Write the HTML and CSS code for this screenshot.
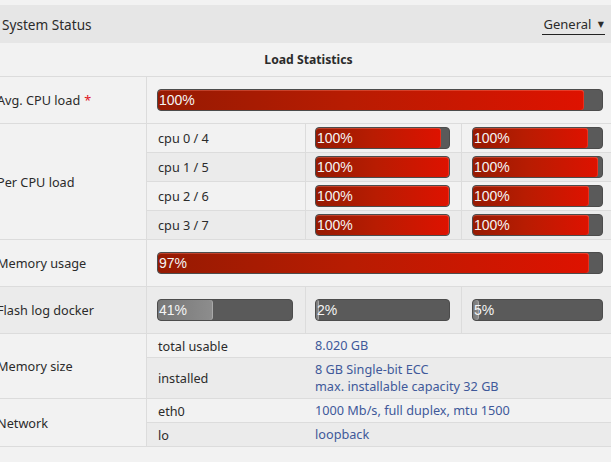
FILE: index.html
```html
<!DOCTYPE html>
<html lang="en">
  <head>
    <meta charset="UTF-8" />
    <title>System Status</title>
    <link rel="stylesheet" href="styles.css">
  </head>

  <body>
    <header class="topbar">
      <h1>System Status</h1>
      <div class="picker">General <span class="caret">&#9660;</span></div>
    </header>

    <h2 class="sectionTitle">Load Statistics</h2>

    <main class="stats">
      <div class="row tall">
        <div class="label">Avg. CPU load <span class="req">*</span></div>
        <div class="value">
          <div class="bar"><div class="fill" style="width: 96%"></div><span class="pct">100%</span></div>
        </div>
      </div>

      <div class="row">
        <div class="label">Per CPU load</div>
        <div class="group">
          <div class="sub cpu">
            <div class="cell name">cpu 0 / 4</div>
            <div class="cell mid"><div class="bar"><div class="fill" style="width: 94%"></div><span class="pct">100%</span></div></div>
            <div class="cell last"><div class="bar"><div class="fill" style="width: 89%"></div><span class="pct">100%</span></div></div>
          </div>
          <div class="sub cpu alt">
            <div class="cell name">cpu 1 / 5</div>
            <div class="cell mid"><div class="bar"><div class="fill" style="width: 100%"></div><span class="pct">100%</span></div></div>
            <div class="cell last"><div class="bar"><div class="fill" style="width: 97%"></div><span class="pct">100%</span></div></div>
          </div>
          <div class="sub cpu">
            <div class="cell name">cpu 2 / 6</div>
            <div class="cell mid"><div class="bar"><div class="fill" style="width: 100%"></div><span class="pct">100%</span></div></div>
            <div class="cell last"><div class="bar"><div class="fill" style="width: 90%"></div><span class="pct">100%</span></div></div>
          </div>
          <div class="sub cpu alt">
            <div class="cell name">cpu 3 / 7</div>
            <div class="cell mid"><div class="bar"><div class="fill" style="width: 100%"></div><span class="pct">100%</span></div></div>
            <div class="cell last"><div class="bar"><div class="fill" style="width: 90%"></div><span class="pct">100%</span></div></div>
          </div>
        </div>
      </div>

      <div class="row tall">
        <div class="label">Memory usage</div>
        <div class="value">
          <div class="bar"><div class="fill" style="width: 97%"></div><span class="pct">97%</span></div>
        </div>
      </div>

      <div class="row tall shaded">
        <div class="label">Flash log docker</div>
        <div class="sub triple">
          <div class="cell first"><div class="bar"><div class="fill grey" style="width: 41%"></div><span class="pct">41%</span></div></div>
          <div class="cell mid"><div class="bar"><div class="fill grey" style="width: 2%"></div><span class="pct">2%</span></div></div>
          <div class="cell last"><div class="bar"><div class="fill grey" style="width: 5%"></div><span class="pct">5%</span></div></div>
        </div>
      </div>

      <div class="row">
        <div class="label">Memory size</div>
        <div class="group">
          <div class="sub info">
            <div class="cell name">total usable</div>
            <div class="cell info">8.020 GB</div>
          </div>
          <div class="sub info alt twoline">
            <div class="cell name">installed</div>
            <div class="cell info">8 GB Single-bit ECC<br>max. installable capacity 32 GB</div>
          </div>
        </div>
      </div>

      <div class="row">
        <div class="label">Network</div>
        <div class="group">
          <div class="sub info">
            <div class="cell name">eth0</div>
            <div class="cell info">1000 Mb/s, full duplex, mtu 1500</div>
          </div>
          <div class="sub info alt">
            <div class="cell name">lo</div>
            <div class="cell info">loopback</div>
          </div>
        </div>
      </div>
    </main>
  </body>
</html>
```

FILE: styles.css
```css
body {
  margin: 0;
  background-color: #f2f2f2;
  color: #2b2b2b;
  font-family: "Noto Sans", "DejaVu Sans", sans-serif;
  font-size: 12.7px;
}

.topbar {
  margin-top: 5px;
  height: 38px;
  background-color: #e6e6e6;
  display: flex;
  justify-content: space-between;
  align-items: center;
  padding: 0 6px 0 2px;
}

.topbar h1 {
  margin: 0;
  font-size: 13.6px;
  font-weight: normal;
}

.picker {
  font-size: 13px;
  border-bottom: 1px solid #222;
  padding: 0 1px 1px 2px;
  line-height: 18px;
  margin-top: 2px;
}

.caret {
  font-size: 8px;
  vertical-align: 2px;
  margin-left: 3px;
}

.sectionTitle {
  margin: 0;
  height: 33px;
  line-height: 33px;
  padding-left: 6px;
  text-align: center;
  font-size: 12.2px;
  font-weight: bold;
  border-bottom: 1px solid #dcdcdc;
}

.stats {
  margin-left: -5px;
}

.row {
  display: grid;
  grid-template-columns: 152px 1fr;
  border-bottom: 1px solid #dcdcdc;
}

.tall {
  height: 46px;
}

.shaded {
  background-color: #ebebeb;
}

.label {
  box-sizing: border-box;
  border-right: 1px solid #dcdcdc;
  padding-left: 2px;
  display: flex;
  align-items: center;
}

.req {
  color: #e0141e;
  margin-left: 4px;
}

.value {
  display: flex;
  align-items: center;
  padding: 0 8px 0 10px;
}

.value .bar {
  flex: 1;
}

.sub {
  display: grid;
  grid-template-columns: 159px 156px 1fr;
}

.group .sub {
  border-bottom: 1px solid #dcdcdc;
}

.group .sub:last-child {
  border-bottom: none;
}

.alt {
  background-color: #ebebeb;
}

.cpu {
  height: 28px;
}

.info {
  grid-template-columns: 159px 1fr;
  min-height: 23px;
}

.twoline {
  height: 40px;
}

.cell {
  box-sizing: border-box;
  display: flex;
  align-items: center;
}

.name {
  padding-left: 11px;
}

.cpu .name,
.triple .first,
.cpu .mid,
.triple .mid {
  border-right: 1px solid #dcdcdc;
}

.first {
  padding: 0 12px 0 10px;
}

.mid {
  padding: 0 11px 0 9px;
}

.last {
  padding: 0 8px 0 10px;
}

.cell.info {
  padding-left: 9px;
  color: #40599a;
  line-height: 17px;
}

.cell .bar {
  flex: 1;
}

.bar {
  display: grid;
  height: 22px;
  box-sizing: border-box;
  background-color: #5a5a5a;
  border: 1px solid #4c4c4c;
  border-radius: 4px;
  overflow: hidden;
}

.bar > * {
  grid-area: 1 / 1;
}

.fill {
  height: 100%;
  border-radius: 3px;
  background: linear-gradient(to right, #961a02, #b81c02 45%, #de1200);
  box-shadow: inset 0 1px 0 rgba(255, 140, 120, 0.35), inset -1px 0 0 rgba(255, 120, 100, 0.3);
}

.fill.grey {
  background: linear-gradient(to right, #777, #8d8d8d);
  box-shadow: inset -1px 0 0 rgba(255, 255, 255, 0.25);
}

.pct {
  align-self: center;
  padding-left: 1px;
  color: #f4f4f4;
  font-family: "Liberation Sans", Arial, sans-serif;
  font-size: 14px;
  line-height: 16px;
}
```
